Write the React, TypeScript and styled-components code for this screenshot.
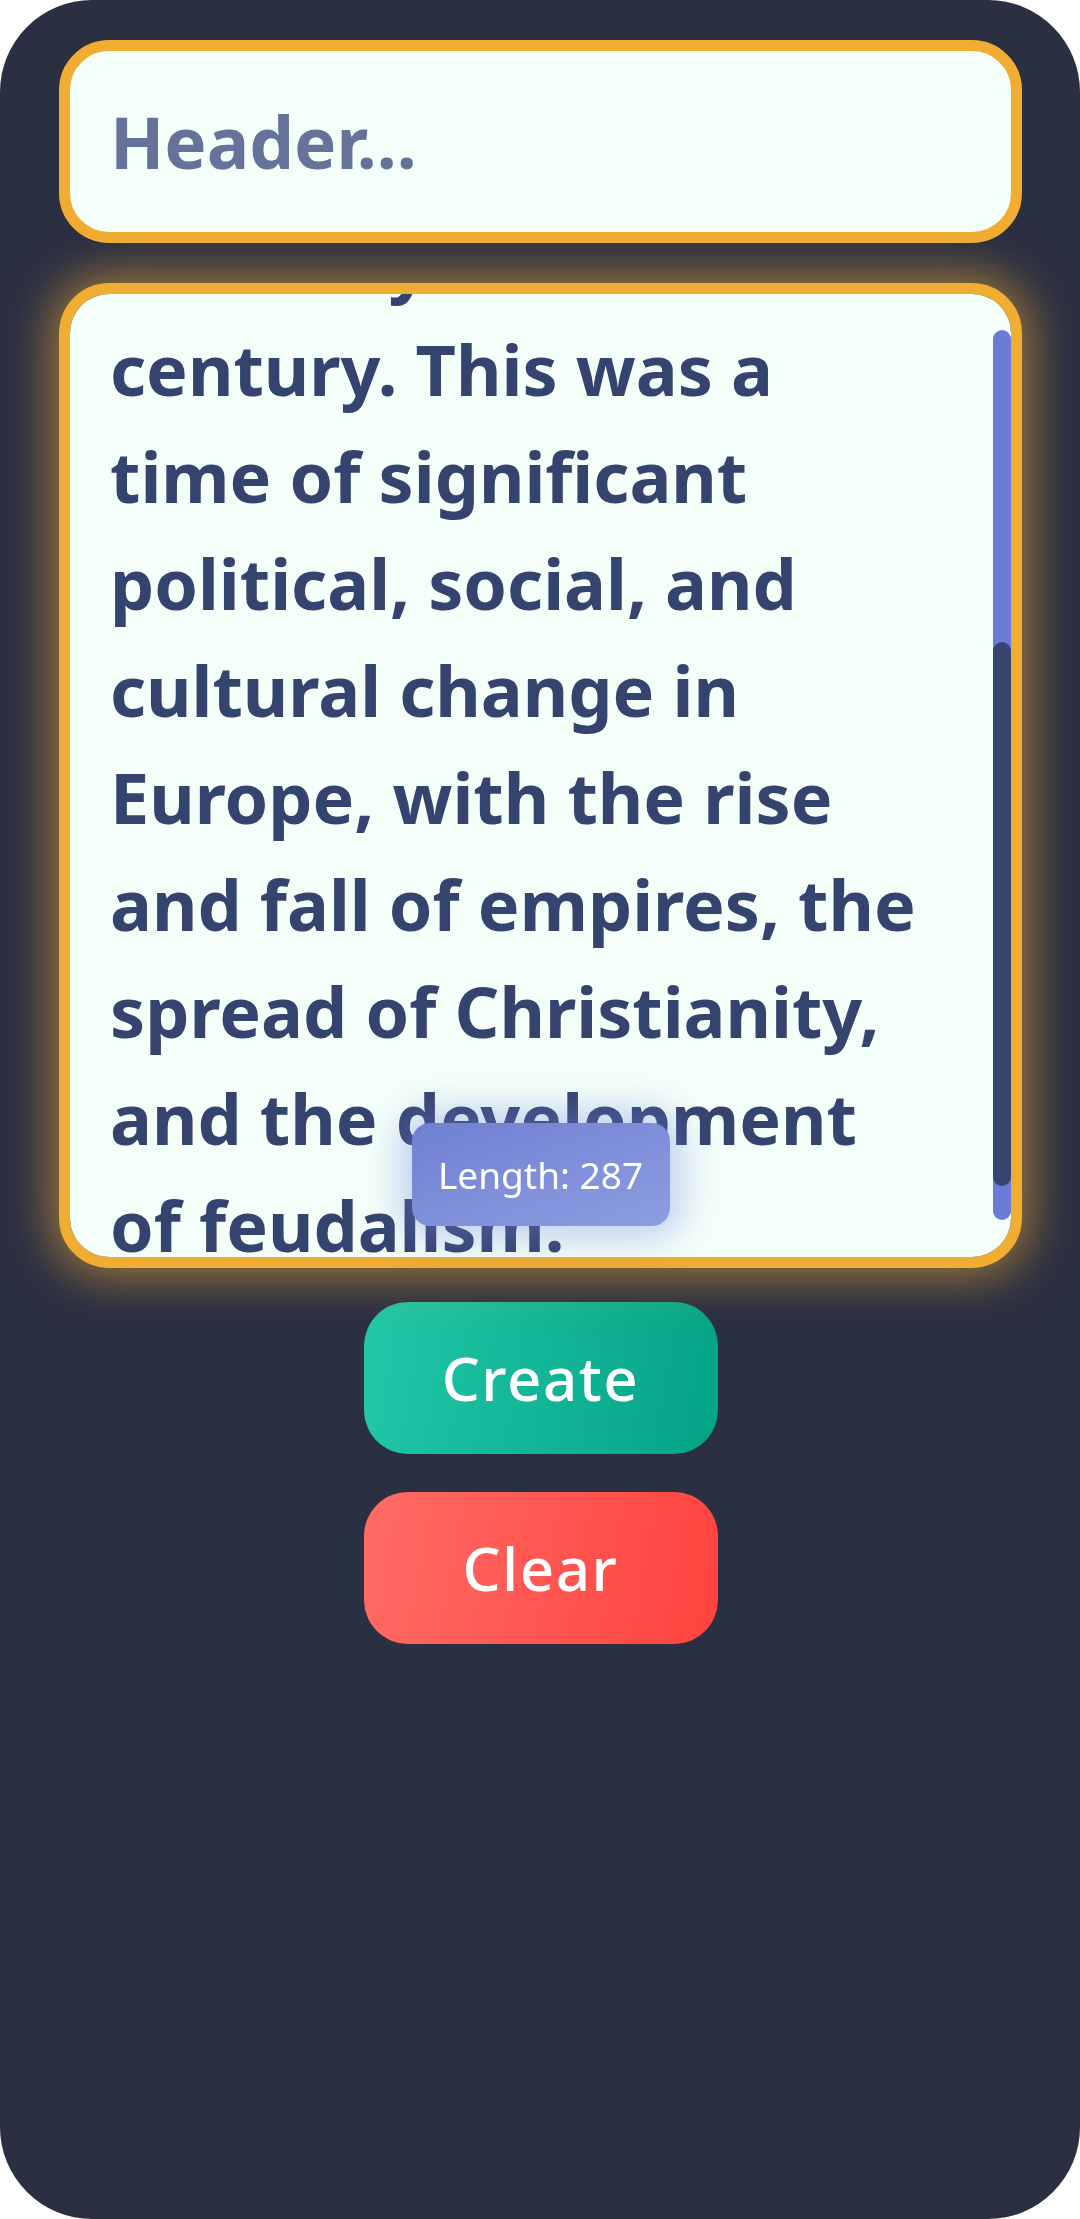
import React, { useCallback, useLayoutEffect, useRef, useState } from "react";
import styled, { createGlobalStyle } from "styled-components";

const GlobalStyle = createGlobalStyle`
  html, body {
    margin: 0;
    padding: 0;
    background: #ffffff;
  }
  * { box-sizing: border-box; }
`;

const FONT = `"Noto Sans", "Open Sans", sans-serif`;

const Page = styled.main`
  width: 1080px;
  height: 100vh;
  min-height: 2219px;
  background: #2b2f42;
  border-radius: 92px;
  display: flex;
  flex-direction: column;
  align-items: center;
  padding: 40px 58px 0 59px;
  font-family: ${FONT};
`;

const HeaderField = styled.input`
  width: 100%;
  height: 203px;
  border: 11px solid #f0ad32;
  border-radius: 50px;
  background: #f4fffa;
  padding: 0 40px;
  font-family: ${FONT};
  font-size: 71px;
  font-weight: 700;
  color: #35436f;
  outline: none;
  &::placeholder {
    color: #65739a;
    opacity: 1;
  }
`;

const EditorWrap = styled.div`
  position: relative;
  width: 100%;
  margin-top: 40px;
  border-radius: 50px;
  box-shadow: 0 0 46px 9px rgba(240, 173, 50, 0.58);
`;

const BodyArea = styled.textarea`
  display: block;
  width: 100%;
  height: 985px;
  border: 11px solid #f0ad32;
  border-radius: 50px;
  background: #f4fffa;
  padding: 38px 92px 38px 40px;
  font-family: ${FONT};
  font-size: 70px;
  font-weight: 700;
  line-height: 107px;
  color: #35436f;
  caret-color: #f0ad32;
  resize: none;
  outline: none;
  overflow-y: scroll;
  scrollbar-width: none;
  &::-webkit-scrollbar {
    display: none;
  }
`;

const ScrollTrack = styled.div`
  position: absolute;
  top: 47px;
  bottom: 48px;
  right: 11px;
  width: 18px;
  border-radius: 9px;
  background: #6b7bd9;
  pointer-events: none;
`;

const ScrollThumb = styled.div`
  position: absolute;
  left: 0;
  right: 0;
  border-radius: 9px;
  background: #37446f;
`;

const LengthBadge = styled.div`
  position: absolute;
  left: 50%;
  bottom: 42px;
  transform: translateX(-50%);
  width: 258px;
  height: 103px;
  border-radius: 18px;
  background: linear-gradient(160deg, #7080d2 0%, #8d9de1 100%);
  box-shadow: 0 0 36px 12px rgba(115, 130, 220, 0.4);
  display: flex;
  align-items: center;
  justify-content: center;
  color: #ffffff;
  font-size: 37px;
  font-weight: 400;
  pointer-events: none;
`;

const ButtonStack = styled.div`
  display: flex;
  flex-direction: column;
  align-items: center;
  gap: 38px;
  margin-top: 34px;
`;

const ActionButton = styled.button<{ $variant: "create" | "clear" }>`
  width: 354px;
  height: 152px;
  border: none;
  border-radius: 44px;
  color: #ffffff;
  font-family: ${FONT};
  font-size: 60px;
  font-weight: 500;
  letter-spacing: 1.5px;
  cursor: pointer;
  background: ${(p) =>
    p.$variant === "create"
      ? "linear-gradient(100deg, #22c8a8 0%, #03a385 100%)"
      : "linear-gradient(100deg, #ff6b66 0%, #ff433e 100%)"};
`;

const INITIAL =
  "The Middle Ages began with the fall of the Western Empire in the fifth century and ended by the 15th\ncentury. This was a time of significant political, social, and cultural change in Europe, with the rise and fall of empires, the spread of Christianity, and the development of feudalism.";

const TRACK_H = 985 - 47 - 48;

export default function App() {
  const [title, setTitle] = useState("");
  const [body, setBody] = useState(INITIAL);
  const [thumb, setThumb] = useState({ top: 0, height: TRACK_H });
  const areaRef = useRef<HTMLTextAreaElement>(null);

  const syncThumb = useCallback(() => {
    const el = areaRef.current;
    if (!el) return;
    const ratio = Math.min(1, el.clientHeight / el.scrollHeight);
    const height = TRACK_H * ratio;
    const max = el.scrollHeight - el.clientHeight;
    const top = max > 0 ? ((TRACK_H - height) * el.scrollTop) / max : 0;
    setThumb({ top, height });
  }, []);

  useLayoutEffect(() => {
    const el = areaRef.current;
    if (!el) return;
    el.focus();
    el.setSelectionRange(el.value.length, el.value.length);
    el.scrollTop = el.scrollHeight - el.clientHeight - 60;
    syncThumb();
  }, [syncThumb]);

  return (
    <>
      <GlobalStyle />
      <Page>
        <HeaderField
          placeholder="Header..."
          value={title}
          onChange={(e) => setTitle(e.target.value)}
        />
        <EditorWrap>
          <BodyArea
            ref={areaRef}
            value={body}
            onScroll={syncThumb}
            onChange={(e) => {
              setBody(e.target.value);
              syncThumb();
            }}
            spellCheck={false}
          />
          <ScrollTrack>
            <ScrollThumb style={{ top: thumb.top, height: thumb.height }} />
          </ScrollTrack>
          <LengthBadge>Length: {body.length}</LengthBadge>
        </EditorWrap>
        <ButtonStack>
          <ActionButton $variant="create">Create</ActionButton>
          <ActionButton $variant="clear" onClick={() => setBody("")}>
            Clear
          </ActionButton>
        </ButtonStack>
      </Page>
    </>
  );
}
